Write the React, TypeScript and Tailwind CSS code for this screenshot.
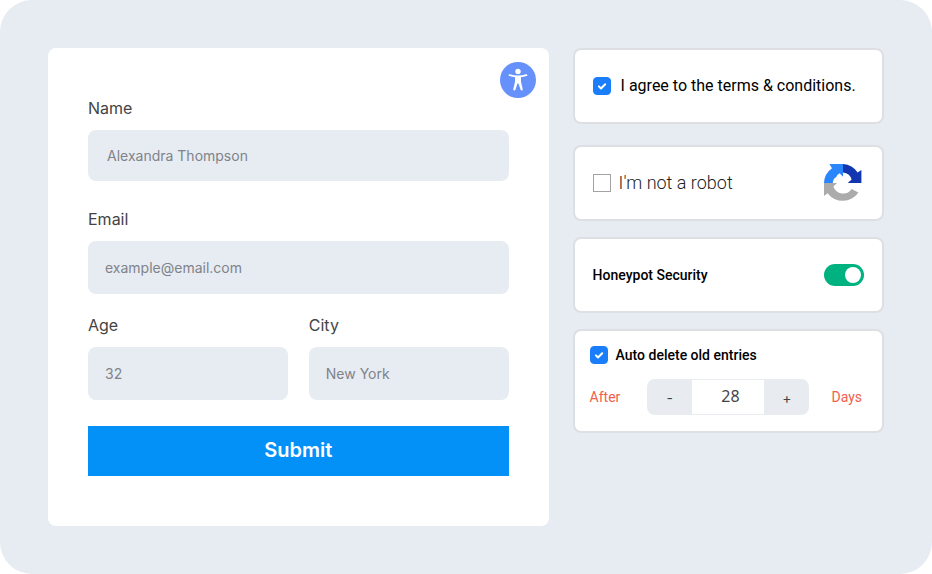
import React, { useState } from 'react';

const AccessibilityIcon: React.FC = () => (
  <svg viewBox="0 0 36 36" className="w-9 h-9" aria-hidden="true">
    <circle cx="18" cy="18" r="18" fill="#6691fb" />
    <circle cx="18" cy="9.4" r="2.7" fill="#fff" />
    <path
      d="M9.6 13.2 Q18 15.8 26.4 13.2"
      fill="none"
      stroke="#fff"
      strokeWidth="1.9"
      strokeLinecap="round"
    />
    <path
      d="M15 14.2h6v5.6l1.7 7.2a1.1 1.1 0 0 1-2.1.7L18.5 21.6h-1l-2.1 6.1a1.1 1.1 0 0 1-2.1-.7l1.7-7.2z"
      fill="#fff"
    />
  </svg>
);

const CaptchaLogo: React.FC = () => (
  <svg viewBox="0 0 38 38" className="w-[38px] h-[38px] shrink-0" aria-hidden="true">
    <path
      fill="#2b85fb"
      d="M0 19A18.8 18.8 0 0 1 8 4.2L5.4 0H19v12.8L15.6 9.2Q12.6 10.6 12.3 13Q9 14.4 8.8 19z"
    />
    <path
      fill="#1235b0"
      d="M19 0A18.6 18.6 0 0 1 33.6 8.6L37.4 6v13H23.8l3.8-3.4A9.8 9.8 0 0 0 19 8.4z"
    />
    <path
      fill="#ababab"
      d="M0 19h13l-3.6 3.6A10.2 10.2 0 0 0 27.6 25l6.8 3.4A18.8 18.8 0 0 1 3.6 29.2L0 32z"
    />
  </svg>
);

const Field: React.FC<{
  id: string;
  label: string;
  placeholder: string;
  type?: string;
  inputClass: string;
}> = ({ id, label, placeholder, type = 'text', inputClass }) => (
  <div className="flex flex-col gap-2.5 min-w-0">
    <label htmlFor={id} className="text-base leading-6 text-[#444444]">
      {label}
    </label>
    <input
      id={id}
      type={type}
      placeholder={placeholder}
      className={`w-full rounded-lg bg-[#e7ecf3] text-sm text-[#444444] placeholder:text-[#808389] outline-none ${inputClass}`}
    />
  </div>
);

const TickBox: React.FC<{
  id: string;
  checked: boolean;
  onChange: (value: boolean) => void;
}> = ({ id, checked, onChange }) => (
  <span className="grid shrink-0 w-[18px] h-[18px]">
    <input
      id={id}
      type="checkbox"
      checked={checked}
      onChange={(e) => onChange(e.target.checked)}
      className="col-start-1 row-start-1 w-[18px] h-[18px] appearance-none rounded border border-[#b5b5b5] checked:border-[#1a7efb] checked:bg-[#1a7efb]"
    />
    {checked && (
      <svg
        viewBox="0 0 18 18"
        className="col-start-1 row-start-1 w-[18px] h-[18px] pointer-events-none"
        aria-hidden="true"
      >
        <path
          d="M5.9 9.4 8 11.5 12.2 7.2"
          fill="none"
          stroke="#fff"
          strokeWidth="2"
          strokeLinecap="round"
          strokeLinejoin="round"
        />
      </svg>
    )}
  </span>
);

export default function App() {
  const [agreed, setAgreed] = useState(true);
  const [honeypot, setHoneypot] = useState(true);
  const [autoDelete, setAutoDelete] = useState(true);
  const [days, setDays] = useState(28);

  return (
    <main className="min-h-screen rounded-[32px] bg-[#e7ecf3] p-12 flex items-start gap-6 font-['Roboto',sans-serif]">
      {/* Form preview */}
      <div className="relative w-[60%] min-w-0 flex-none max-w-[calc(60%-1px)] rounded-lg bg-white font-['Inter',sans-serif]">
        <button
          type="button"
          aria-label="Accessibility"
          className="absolute top-3.5 right-[13px] rounded-full cursor-pointer"
        >
          <AccessibilityIcon />
        </button>

        <form onSubmit={(e) => e.preventDefault()} className="px-10 pt-12 pb-[50px]">
          <Field id="name" label="Name" placeholder="Alexandra Thompson" inputClass="h-[51px] px-[19px]" />
          <div className="mt-[26px]">
            <Field
              id="email"
              label="Email"
              type="email"
              placeholder="example@email.com"
              inputClass="h-[53px] px-[17px]"
            />
          </div>
          <div className="mt-[19px] grid grid-cols-2 gap-[21px]">
            <Field id="age" label="Age" placeholder="32" inputClass="h-[53px] px-[17px]" />
            <Field id="city" label="City" placeholder="New York" inputClass="h-[53px] px-[17px]" />
          </div>

          <button
            type="submit"
            className="mt-[26px] w-full h-[50px] pb-0.5 bg-[#0390f7] text-xl font-semibold text-white cursor-pointer"
          >
            Submit
          </button>
        </form>
      </div>

      {/* Security settings */}
      <div className="flex min-w-0 flex-1 flex-col gap-4 text-black">
        <section className="mb-[5px] flex h-[76px] items-center gap-2.5 rounded-lg border-2 border-[#dddfe2] bg-white px-[18px]">
          <TickBox id="terms" checked={agreed} onChange={setAgreed} />
          <label htmlFor="terms" className="text-base">
            I agree to the terms &amp; conditions.
          </label>
        </section>

        <section className="flex h-[76px] items-center gap-2 rounded-lg border-2 border-[#dddfe2] bg-white pl-[18px] pr-5">
          <input
            id="robot"
            type="checkbox"
            className="w-[18px] h-[18px] shrink-0 appearance-none border border-[#a3a3a3] bg-white checked:bg-[#1a7efb]"
          />
          <label htmlFor="robot" className="flex-1 text-lg font-light text-[#222222]">
            I'm not a robot
          </label>
          <CaptchaLogo />
        </section>

        <section className="flex h-[76px] items-center justify-between rounded-lg border-2 border-[#dddfe2] bg-white px-[18px]">
          <label htmlFor="honeypot" className="text-sm font-medium">
            Honeypot Security
          </label>
          <input
            id="honeypot"
            type="checkbox"
            role="switch"
            checked={honeypot}
            onChange={(e) => setHoneypot(e.target.checked)}
            className="flex w-10 h-[22px] appearance-none items-center rounded-full bg-[#b5b5b5] px-[3px] before:h-4 before:w-4 before:rounded-full before:bg-white checked:justify-end checked:bg-[#00b27f]"
          />
        </section>

        <section className="rounded-lg border-2 border-[#dddfe2] bg-white pt-3.5 pb-4 pl-[15px] pr-5">
          <div className="flex items-center gap-2">
            <TickBox id="auto-delete" checked={autoDelete} onChange={setAutoDelete} />
            <label htmlFor="auto-delete" className="text-sm font-medium">
              Auto delete old entries
            </label>
          </div>
          <div className="mt-3.5 flex items-center text-sm text-[#f0604d]">
            <label htmlFor="days">After</label>
            <div className="ml-[27px] mr-[22px] flex h-9 flex-1 overflow-hidden rounded-lg font-['Inter',sans-serif] text-[#444444]">
              <button
                type="button"
                aria-label="Decrease days"
                onClick={() => setDays(Math.max(0, days - 1))}
                className="w-[45px] shrink-0 bg-[#e8ebef] pt-0.5 cursor-pointer"
              >
                -
              </button>
              <input
                id="days"
                type="text"
                inputMode="numeric"
                value={days}
                onChange={(e) => setDays(Number(e.target.value) || 0)}
                className="w-0 min-w-0 flex-1 border-y border-[#e8ebef] bg-white pb-0.5 pl-1 text-center text-base font-['Noto_Sans',sans-serif] outline-none"
              />
              <button
                type="button"
                aria-label="Increase days"
                onClick={() => setDays(days + 1)}
                className="w-[45px] shrink-0 bg-[#e8ebef] pt-0.5 cursor-pointer"
              >
                +
              </button>
            </div>
            <span>Days</span>
          </div>
        </section>
      </div>
    </main>
  );
}
